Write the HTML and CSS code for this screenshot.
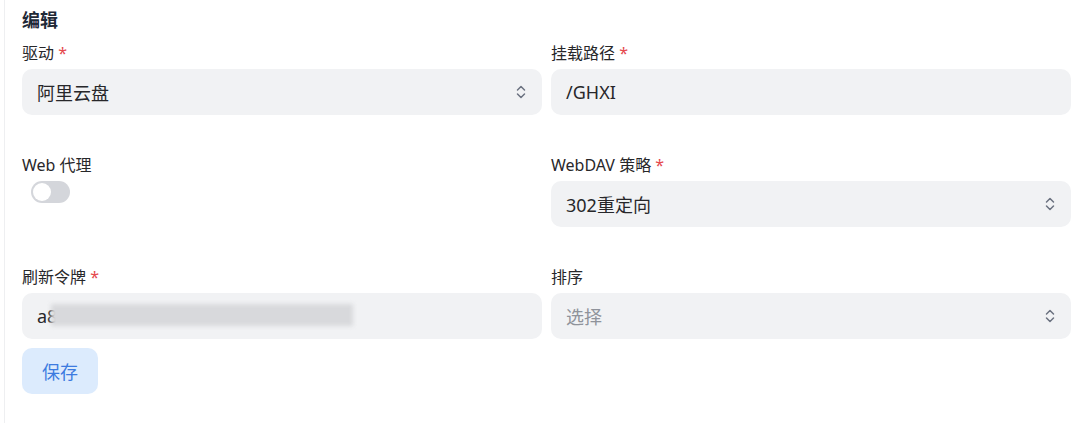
FILE: index.html
```html
<!DOCTYPE html>
<html lang="zh-CN">
<head>
  <meta charset="UTF-8">
  <title>编辑</title>
  <link rel="stylesheet" href="styles.css">
</head>
<body>
  <div class="painel">
    <h2 class="titulo">编辑</h2>

    <div class="grade">
      <div class="campo">
        <label>驱动 <span class="obrigatorio">*</span></label>
        <div class="caixa select">
          <span>阿里云盘</span>
          <svg class="seta" viewBox="0 0 10 16" aria-hidden="true">
            <path d="M1.5 6 L5 2.5 L8.5 6 M1.5 10 L5 13.5 L8.5 10" />
          </svg>
        </div>
      </div>

      <div class="campo">
        <label>挂载路径 <span class="obrigatorio">*</span></label>
        <div class="caixa"><span>/GHXI</span></div>
      </div>

      <div class="campo">
        <label>Web 代理</label>
        <div class="interruptor"><span class="bolinha"></span></div>
      </div>

      <div class="campo">
        <label>WebDAV 策略 <span class="obrigatorio">*</span></label>
        <div class="caixa select">
          <span>302重定向</span>
          <svg class="seta" viewBox="0 0 10 16" aria-hidden="true">
            <path d="M1.5 6 L5 2.5 L8.5 6 M1.5 10 L5 13.5 L8.5 10" />
          </svg>
        </div>
      </div>

      <div class="campo">
        <label>刷新令牌 <span class="obrigatorio">*</span></label>
        <div class="caixa token">
          <span>a8</span>
          <span class="borrado"></span>
        </div>
      </div>

      <div class="campo">
        <label>排序</label>
        <div class="caixa select">
          <span class="placeholder">选择</span>
          <svg class="seta" viewBox="0 0 10 16" aria-hidden="true">
            <path d="M1.5 6 L5 2.5 L8.5 6 M1.5 10 L5 13.5 L8.5 10" />
          </svg>
        </div>
      </div>
    </div>

    <button class="salvar">保存</button>
  </div>
</body>
</html>
```

FILE: styles.css
```css
* {
  margin: 0;
  padding: 0;
  box-sizing: border-box;
}

body {
  font-family: "Noto Sans", "Noto Sans CJK SC", sans-serif;
  background-color: white;
  color: #1f2937;
  padding-left: 4px;
}

.painel {
  border-left: 1px solid #eeeff1;
  min-height: 423px;
  padding: 8px 9px 0 17px;
}

.titulo {
  font-size: 18px;
  font-weight: bold;
  line-height: 24px;
  margin-bottom: 9px;
}

.grade {
  display: grid;
  grid-template-columns: 1fr 1fr;
  column-gap: 9px;
  row-gap: 38px;
}

.campo label {
  display: block;
  font-size: 16px;
  line-height: 24px;
  margin-bottom: 4px;
  color: #27272a;
}

.obrigatorio {
  color: #e5484d;
}

.caixa {
  position: relative;
  height: 46px;
  background-color: #f1f2f4;
  border-radius: 10px;
  display: flex;
  align-items: center;
  justify-content: space-between;
  padding: 0 16px 0 15px;
  font-size: 18px;
  color: #27272a;
}

.placeholder {
  color: #8f939b;
}

.seta {
  width: 10px;
  height: 16px;
  fill: none;
  stroke: #6b7280;
  stroke-width: 1.5;
  stroke-linecap: round;
  stroke-linejoin: round;
}

.interruptor {
  width: 39px;
  height: 22px;
  margin-left: 9px;
  background-color: #d4d6db;
  border-radius: 11px;
  padding: 2px;
}

.bolinha {
  display: block;
  width: 18px;
  height: 18px;
  border-radius: 50%;
  background-color: white;
}

.borrado {
  position: absolute;
  left: 29px;
  top: 11px;
  width: 302px;
  height: 22px;
  background-color: #d8d9dc;
  filter: blur(2px);
}

.salvar {
  margin-top: 9px;
  height: 46px;
  padding: 0 20px;
  font-family: inherit;
  font-size: 18px;
  color: #3d7be0;
  background-color: #dcebfd;
  border: none;
  border-radius: 10px;
}
```
